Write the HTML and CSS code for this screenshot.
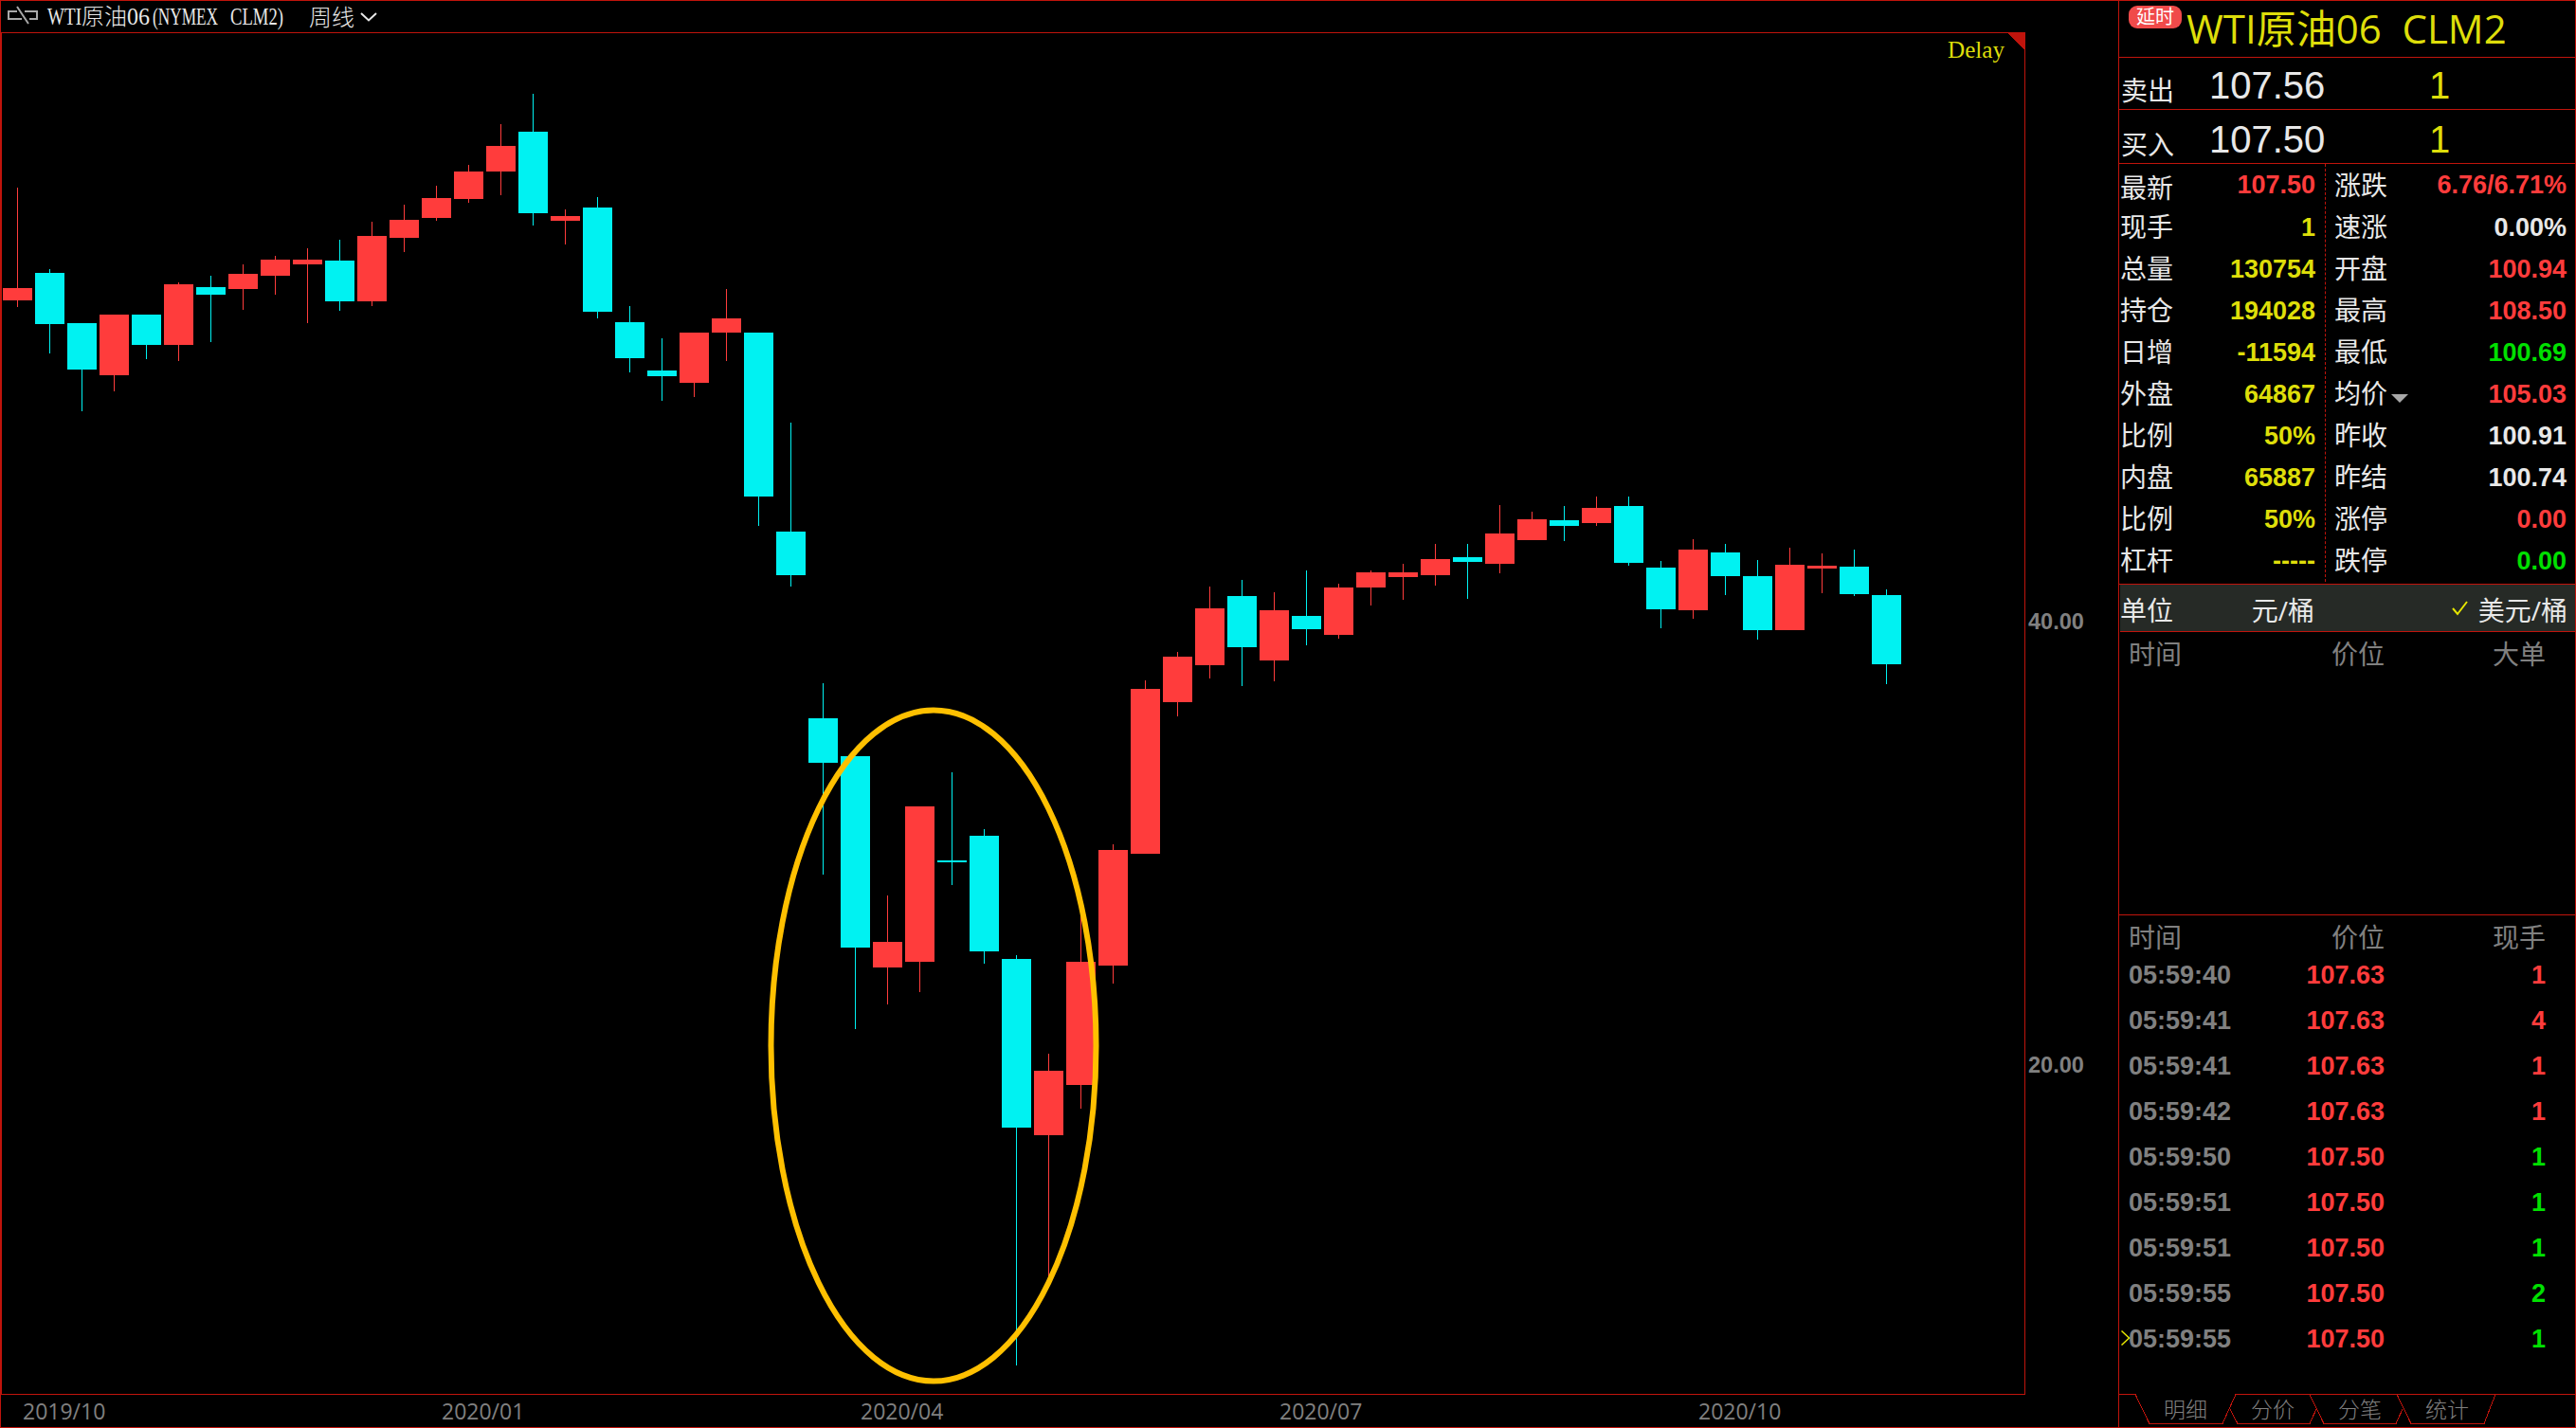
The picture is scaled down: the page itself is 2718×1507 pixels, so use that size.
FILE: index.html
```html
<!DOCTYPE html>
<html lang="zh-CN">
<head>
    <meta charset="UTF-8">
    <meta name="viewport" content="width=device-width, initial-scale=1.0">
    <title>WTI原油06 周线</title>
    <link rel="stylesheet" href="styles.css">
</head>
<body>
    <div class="main">
        <div class="topbar">
            <svg class="link-icon" width="34" height="20" viewBox="0 0 34 20">
                <path d="M11 6H2v8h14M19 6h13v8h-8M11 1l12 18"/>
            </svg>
            <svg class="symbol" width="252" height="32">
                <text x="0" y="25" textLength="36" lengthAdjust="spacingAndGlyphs">WTI</text>
                <text class="cjk" x="36" y="25">原油</text>
                <text x="84" y="25" textLength="24" lengthAdjust="spacingAndGlyphs">06</text>
                <text x="111" y="25" textLength="69" lengthAdjust="spacingAndGlyphs">(NYMEX</text>
                <text x="193" y="25" textLength="56" lengthAdjust="spacingAndGlyphs">CLM2)</text>
            </svg>
            <span class="period">周线</span>
            <svg class="chevron" width="18" height="10" viewBox="0 0 18 10"><path d="M1 1l8 7.500l8-7.500"/></svg>
        </div>

        <svg class="chart" width="2235" height="1438" viewBox="0 34 2235 1438">
            <g class="frame">
                <rect x="0" y="34" width="2137" height="1"/>
                <rect x="0" y="1471" width="2137" height="1"/>
                <rect x="2136" y="34" width="1" height="1438"/>
                <rect x="0" y="34" width="2" height="1438"/>
                <path d="M2117 34h20v20z"/>
            </g>
            <g id="candles"></g>
            <ellipse class="mark" cx="985" cy="1103.500" rx="171.500" ry="354"/>
            <text class="delay" x="2055" y="61" textLength="60" lengthAdjust="spacingAndGlyphs">Delay</text>
            <text class="price" x="2140" y="664">40.00</text>
            <text class="price" x="2140" y="1132">20.00</text>
        </svg>

        <div class="dates">
            <span>2019/10</span>
            <span>2020/01</span>
            <span>2020/04</span>
            <span>2020/07</span>
            <span>2020/10</span>
        </div>
    </div>

    <div class="side">
        <div class="title">
            <span class="badge">延时</span>
            <span class="name">WTI原油06&nbsp; CLM2</span>
        </div>
        <div class="order ask">
            <span class="label">卖出</span>
            <span class="big">107.56</span>
            <span class="big yellow">1</span>
        </div>
        <div class="order bid">
            <span class="label">买入</span>
            <span class="big">107.50</span>
            <span class="big yellow">1</span>
        </div>

        <div class="quotes">
            <div class="col left">
                <div class="row first"><span class="label">最新</span><b class="red">107.50</b></div>
                <div class="row"><span class="label">现手</span><b class="yellow">1</b></div>
                <div class="row"><span class="label">总量</span><b class="yellow">130754</b></div>
                <div class="row"><span class="label">持仓</span><b class="yellow">194028</b></div>
                <div class="row"><span class="label">日增</span><b class="yellow">-11594</b></div>
                <div class="row"><span class="label">外盘</span><b class="yellow">64867</b></div>
                <div class="row"><span class="label">比例</span><b class="yellow">50%</b></div>
                <div class="row"><span class="label">内盘</span><b class="yellow">65887</b></div>
                <div class="row"><span class="label">比例</span><b class="yellow">50%</b></div>
                <div class="row"><span class="label">杠杆</span><b class="yellow">-----</b></div>
            </div>
            <div class="col right">
                <div class="row first"><span class="label">涨跌</span><b class="red">6.76/6.71%</b></div>
                <div class="row"><span class="label">速涨</span><b>0.00%</b></div>
                <div class="row"><span class="label">开盘</span><b class="red">100.94</b></div>
                <div class="row"><span class="label">最高</span><b class="red">108.50</b></div>
                <div class="row"><span class="label">最低</span><b class="green">100.69</b></div>
                <div class="row"><span class="label">均价</span><i class="caret"></i><b class="red">105.03</b></div>
                <div class="row"><span class="label">昨收</span><b>100.91</b></div>
                <div class="row"><span class="label">昨结</span><b>100.74</b></div>
                <div class="row"><span class="label">涨停</span><b class="red">0.00</b></div>
                <div class="row"><span class="label">跌停</span><b class="green">0.00</b></div>
            </div>
        </div>

        <div class="unit">
            <span>单位</span>
            <span class="yuan">元/桶</span>
            <svg class="check" width="17" height="16" viewBox="0 0 17 16"><path d="M1 8l5 6L16 1"/></svg>
            <span>美元/桶</span>
        </div>

        <div class="big-orders">
            <div class="thead"><span>时间</span><span>价位</span><span>大单</span></div>
        </div>

        <div class="ticks">
            <div class="thead"><span>时间</span><span>价位</span><span>现手</span></div>
            <div class="tick"><span>05:59:40</span><span class="red">107.63</span><span class="red">1</span></div>
            <div class="tick"><span>05:59:41</span><span class="red">107.63</span><span class="red">4</span></div>
            <div class="tick"><span>05:59:41</span><span class="red">107.63</span><span class="red">1</span></div>
            <div class="tick"><span>05:59:42</span><span class="red">107.63</span><span class="red">1</span></div>
            <div class="tick"><span>05:59:50</span><span class="red">107.50</span><span class="green">1</span></div>
            <div class="tick"><span>05:59:51</span><span class="red">107.50</span><span class="green">1</span></div>
            <div class="tick"><span>05:59:51</span><span class="red">107.50</span><span class="green">1</span></div>
            <div class="tick"><span>05:59:55</span><span class="red">107.50</span><span class="green">2</span></div>
            <div class="tick">
                <svg class="pointer" width="10" height="16" viewBox="0 0 10 16"><path d="M0.500 0.500L8.500 8L0.500 15.500"/></svg>
                <span>05:59:55</span><span class="red">107.50</span><span class="green">1</span>
            </div>
        </div>

        <svg class="tabs" width="483" height="35" viewBox="2235 1471 483 35">
            <path d="M2235 1471.500h18l15 31h77l14-31h358"/>
            <path d="M2353 1487l8 15.500h76l7-15.500"/>
            <path d="M2437 1471.500l15 31h76l7-15.500"/>
            <path d="M2529 1471.500l15 31h77l12-31"/>
            <text x="2283" y="1496">明细</text>
            <text x="2375" y="1496">分价</text>
            <text x="2467" y="1496">分笔</text>
            <text x="2559" y="1496">统计</text>
        </svg>
    </div>

    <script>
        // [high, body top, body bottom, low, up]
        const candles = [
            [198, 304, 317, 324, 1], [284, 288, 342, 373, 0], [341, 341, 390, 434, 0], [332, 332, 396, 413, 1],
            [332, 332, 364, 379, 0], [298, 300, 364, 381, 1], [291, 303, 311, 361, 0], [279, 289, 305, 327, 1],
            [270, 274, 291, 311, 1], [262, 274, 279, 341, 1], [253, 275, 318, 328, 0], [234, 249, 318, 323, 1],
            [216, 232, 251, 266, 1], [196, 209, 230, 233, 1], [174, 181, 210, 214, 1], [131, 154, 181, 206, 1],
            [99, 139, 225, 238, 0], [221, 228, 233, 258, 1], [208, 219, 329, 336, 0], [323, 340, 378, 393, 0],
            [357, 391, 397, 423, 0], [351, 351, 404, 419, 1], [305, 336, 351, 381, 1], [351, 351, 524, 555, 0],
            [446, 561, 607, 619, 0], [721, 758, 805, 923, 0], [798, 798, 1000, 1086, 0], [945, 994, 1021, 1060, 1],
            [851, 851, 1015, 1047, 1], [815, 908, 910, 934, 0], [875, 882, 1004, 1017, 0], [1008, 1012, 1190, 1441, 0],
            [1112, 1130, 1198, 1348, 1], [960, 1015, 1145, 1170, 1], [891, 897, 1019, 1038, 1], [718, 727, 901, 901, 1],
            [688, 693, 741, 756, 1], [619, 642, 702, 716, 1], [612, 629, 683, 724, 0], [625, 644, 697, 719, 1],
            [602, 650, 664, 681, 0], [616, 620, 670, 674, 1], [602, 604, 620, 639, 1], [595, 604, 609, 633, 1],
            [574, 590, 607, 618, 1], [574, 588, 593, 632, 0], [533, 563, 595, 605, 1], [540, 548, 570, 570, 1],
            [534, 549, 555, 571, 0], [524, 536, 552, 555, 1], [524, 534, 594, 597, 0], [592, 599, 643, 663, 0],
            [569, 580, 644, 653, 1], [574, 583, 608, 628, 0], [591, 608, 665, 675, 0], [578, 596, 665, 665, 1],
            [584, 597, 600, 626, 1], [580, 598, 627, 629, 0], [622, 628, 701, 722, 0]
        ];
        const step = 34;
        const width = 31;

        document.getElementById('candles').innerHTML = candles.map(([high, top, bottom, low, up], i) => {
            const x = 3 + i * step;
            return `<g class="${up ? 'up' : 'down'}">
                <rect x="${x + 15}" y="${high}" width="1" height="${low - high}"/>
                <rect x="${x}" y="${top}" width="${width}" height="${bottom - top}"/>
            </g>`;
        }).join('');
    </script>
</body>
</html>
```
FILE: styles.css
```css
* {
    box-sizing: border-box;
}
body {
    margin: 0;
    width: 2718px;
    height: 1507px;
    display: flex;
    background-color: #000;
    color: #e8e8e8;
    font-family: "Liberation Sans", "Noto Sans CJK SC", sans-serif;
    border: 1px solid #c0140c;
    overflow: hidden;
}
svg {
    display: block;
    flex: none;
    overflow: visible;
}
.red {
    color: #ff3c3c;
}
.green {
    color: #00e000;
}
.yellow {
    color: #dede0a;
}

/* chart side */
.main {
    width: 2234px;
    flex: none;
}
.topbar {
    display: flex;
    height: 33px;
    padding-left: 6px;
}
.link-icon {
    margin-top: 5px;
}
.link-icon path {
    fill: none;
    stroke: #a8a8a8;
    stroke-width: 2;
}
.symbol {
    margin-left: 9px;
}
.symbol text, .delay {
    font-family: "Liberation Serif", serif;
    font-size: 25px;
    fill: #e8e8e8;
}
.symbol .cjk {
    font-family: "Noto Sans CJK SC", sans-serif;
    font-size: 24px;
    font-weight: 300;
}
.period {
    margin-left: 24px;
    font-family: "Noto Sans CJK SC", sans-serif;
    font-size: 24px;
    font-weight: 300;
    line-height: 31px;
}
.chevron {
    margin: 12px 0 0 6px;
}
.chevron path {
    fill: none;
    stroke: #e8e8e8;
    stroke-width: 2;
}
.chart {
    margin-left: -1px;
}
.frame {
    fill: #c0140c;
}
.up {
    fill: #ff3c3c;
}
.down {
    fill: #00f2f2;
}
#candles, .frame {
    shape-rendering: crispEdges;
}
.mark {
    fill: none;
    stroke: #ffc000;
    stroke-width: 6;
}
.chart .delay {
    fill: #dede0a;
}
.price {
    font-size: 23.500px;
    font-weight: bold;
    fill: #808080;
}
.dates {
    display: flex;
    padding-left: 23px;
    font-family: "Open Sans", sans-serif;
    font-size: 23px;
    line-height: 34px;
    color: #808080;
}
.dates span {
    width: 442px;
    flex: none;
}

/* quote side */
.side {
    width: 483px;
    flex: none;
    display: flex;
    flex-direction: column;
    border-left: 1px solid #c0140c;
}
.title {
    display: flex;
    height: 60px;
    padding-left: 10px;
    border-bottom: 1px solid #c0140c;
    color: #dede0a;
}
.badge {
    width: 56px;
    height: 24px;
    margin-top: 5px;
    border-radius: 9px;
    background-color: #f04a4a;
    color: #fff;
    font-family: "Noto Sans CJK SC", sans-serif;
    font-size: 20px;
    line-height: 22px;
    text-align: center;
}
.name {
    margin-left: 5px;
    font-family: "Open Sans", "Noto Sans CJK SC", sans-serif;
    font-size: 42px;
    line-height: 58px;
    white-space: nowrap;
}
.label, .unit span, .thead {
    font-family: "Open Sans", "Noto Sans CJK SC", sans-serif;
    font-size: 28px;
}
.order {
    display: flex;
    align-items: flex-end;
    padding-left: 2px;
    border-bottom: 1px solid #c0140c;
}
.order .label {
    width: 93px;
    flex: none;
    line-height: 34px;
    padding-bottom: 3px;
}
.big {
    width: 232px;
    flex: none;
    font-size: 40px;
    line-height: 50px;
}
.big.yellow {
    width: auto;
}
.ask {
    height: 55px;
}
.bid {
    height: 57px;
}
.quotes {
    display: flex;
    height: 444px;
    border-bottom: 1px solid #c0140c;
}
.col {
    height: 441px;
}
.left {
    width: 218px;
    padding: 0 10px 0 1px;
    border-right: 1px dashed #c0140c;
}
.right {
    width: 263px;
    padding: 0 9px;
}
.row {
    display: flex;
    align-items: center;
    height: 44px;
}
.row .label {
    line-height: 40px;
    padding-bottom: 1px;
}
.left .first .label {
    padding: 5px 0 0;
}
.row b {
    margin-left: auto;
    padding-top: 2px;
    font-size: 27px;
}
.first b {
    padding-top: 0;
}
.caret {
    margin: 10px 0 0 4px;
    border: 9px solid transparent;
    border-top-color: #a8a8a8;
    border-bottom: 0;
}
.unit {
    display: flex;
    align-items: center;
    height: 50px;
    margin: 0 1px;
    padding-right: 8px;
    background-color: #262a26;
    border-bottom: 1px solid #c0140c;
}
.unit span {
    line-height: 46px;
    padding-top: 5px;
}
.unit .yuan {
    width: 149px;
    text-align: right;
}
.check {
    margin: 0 11px 0 auto;
}
.check path, .pointer path {
    fill: none;
    stroke: #e6e600;
    stroke-width: 2;
}
.big-orders {
    height: 299px;
    border-bottom: 1px solid #c0140c;
}
.thead, .tick {
    display: grid;
    grid-template-columns: 130px 140px 170px;
    padding-left: 10px;
    color: #808080;
}
.thead span + span, .tick span + span {
    text-align: right;
}
.thead {
    line-height: 46px;
    height: 39px;
}
.ticks {
    height: 505px;
}
.tick {
    position: relative;
    height: 48px;
    font-size: 27px;
    font-weight: bold;
    line-height: 48px;
}
/* current row marker */
.pointer {
    position: absolute;
    left: 2px;
    top: 15px;
}
.pointer path {
    stroke-width: 1.500;
}
.tabs {
    margin-left: -1px;
}
.tabs path {
    fill: none;
    stroke: #c0140c;
    shape-rendering: crispEdges;
}
.tabs text {
    font-family: "Noto Sans CJK SC", sans-serif;
    font-size: 23px;
    font-weight: 300;
    fill: #808080;
}
```
